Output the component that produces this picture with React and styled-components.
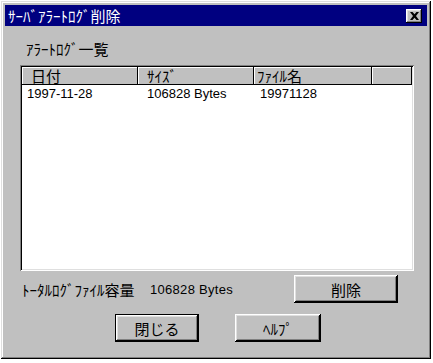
import React from 'react'
import styled, { createGlobalStyle } from 'styled-components'

const GlobalStyle = createGlobalStyle`
  html, body {
    margin: 0;
    padding: 0;
    background: #ffffff;
  }
  body {
    font-family: "Liberation Sans", "Noto Sans CJK JP", sans-serif;
  }
`

const Page = styled.div`
  padding: 1px;
`

const Window = styled.div`
  box-sizing: border-box;
  width: 430px;
  height: 358px;
  padding: 4px;
  background: #c0c0c0;
  box-shadow: inset -1px -1px #000000, inset 1px 1px #dfdfdf,
    inset -2px -2px #808080, inset 2px 2px #ffffff;
  display: flex;
  flex-direction: column;
`

const TitleBar = styled.div`
  height: 21px;
  background: #000080;
  display: flex;
  align-items: center;
  justify-content: space-between;
  padding: 0 5px 0 3px;
`

const TitleText = styled.span`
  color: #ffffff;
  font-size: 15px;
  font-family: "Noto Sans CJK JP", sans-serif;
  line-height: 17px;
`

const CloseBox = styled.div`
  width: 16px;
  height: 14px;
  box-sizing: border-box;
  background: #c0c0c0;
  box-shadow: inset -1px -1px #000000, inset 1px 1px #ffffff,
    inset -2px -2px #808080, inset 2px 2px #dfdfdf;
  display: flex;
  align-items: center;
  justify-content: center;
`

const Body = styled.div`
  flex: 1;
  display: flex;
  flex-direction: column;
  padding: 14px 13px 0 15px;
`

const Label = styled.div`
  font-size: 15px;
  font-family: "Noto Sans CJK JP", sans-serif;
  line-height: 18px;
  height: 18px;
  padding-left: 6px;
  margin-bottom: 7px;
`

const ListBox = styled.div`
  box-sizing: border-box;
  height: 206px;
  background: #ffffff;
  padding: 2px;
  box-shadow: inset 1px 1px #808080, inset -1px -1px #ffffff,
    inset 2px 2px #000000, inset -2px -2px #dfdfdf;
  display: flex;
  flex-direction: column;
`

const Columns = styled.div`
  display: grid;
  grid-template-columns: 116px 116px 118px 1fr;
`

const HeadCell = styled.div`
  box-sizing: border-box;
  height: 18px;
  background: #c0c0c0;
  box-shadow: inset -1px -1px #000000, inset 1px 1px #ffffff;
  font-size: 15px;
  font-family: "Noto Sans CJK JP", sans-serif;
  line-height: 17px;
  padding-left: ${p => p.$pad}px;
  white-space: nowrap;
`

const Cell = styled.div`
  height: 17px;
  font-size: 13px;
  line-height: 17px;
  padding-left: ${p => p.$pad}px;
  white-space: nowrap;
  color: #000000;
`

const TotalRow = styled.div`
  display: flex;
  align-items: center;
  margin-top: 4px;
  height: 28px;
  padding-left: 2px;
`

const TotalLabel = styled.span`
  font-size: 15px;
  font-family: "Noto Sans CJK JP", sans-serif;
  width: 128px;
`

const TotalValue = styled.span`
  font-size: 13px;
  letter-spacing: 0.3px;
  flex: 1;
`

const Button = styled.button`
  box-sizing: border-box;
  width: ${p => p.$w}px;
  height: 28px;
  margin: 0;
  padding: 0;
  border: none;
  background: #c0c0c0;
  font-size: 15px;
  font-family: "Noto Sans CJK JP", sans-serif;
  color: #000000;
  box-shadow: ${p =>
    p.$default
      ? 'inset 0 0 0 1px #000000, inset -2px -2px #000000, inset 2px 2px #ffffff, inset -3px -3px #808080, inset 3px 3px #dfdfdf'
      : 'inset -1px -1px #000000, inset 1px 1px #ffffff, inset -2px -2px #000000, inset 2px 2px #dfdfdf, inset -3px -3px #808080'};
`

const DeleteButton = styled(Button)`
  margin-right: 16px;
`

const ButtonRow = styled.div`
  display: flex;
  justify-content: center;
  gap: 36px;
  margin-top: 11px;
  padding-left: 2px;
`

const columns = [
  { title: '日付', pad: 9 },
  { title: 'ｻｲｽﾞ', pad: 9 },
  { title: 'ﾌｧｲﾙ名', pad: 3 },
  { title: '', pad: 0 },
]

const rows = [['1997-11-28', '106828 Bytes', '19971128', '']]
const cellPads = [5, 9, 6, 0]

export default function App() {
  return (
    <Page>
      <GlobalStyle />
      <Window>
        <TitleBar>
          <TitleText>ｻｰﾊﾞｱﾗｰﾄﾛｸﾞ削除</TitleText>
          <CloseBox>
            <svg width="9" height="8" viewBox="0 0 9 8">
              <path d="M0 0h2.5l2 2.3 2-2.3H9L6 4l3 4H6.5l-2-2.3-2 2.3H0l3-4z" fill="#000" />
            </svg>
          </CloseBox>
        </TitleBar>
        <Body>
          <Label>ｱﾗｰﾄﾛｸﾞ一覧</Label>
          <ListBox>
            <Columns>
              {columns.map((c, i) => (
                <HeadCell key={i} $pad={c.pad}>{c.title}</HeadCell>
              ))}
            </Columns>
            {rows.map((r, ri) => (
              <Columns key={ri}>
                {r.map((v, i) => (
                  <Cell key={i} $pad={cellPads[i]}>{v}</Cell>
                ))}
              </Columns>
            ))}
          </ListBox>
          <TotalRow>
            <TotalLabel>ﾄｰﾀﾙﾛｸﾞﾌｧｲﾙ容量</TotalLabel>
            <TotalValue>106828 Bytes</TotalValue>
            <DeleteButton $w={104}>削除</DeleteButton>
          </TotalRow>
          <ButtonRow>
            <Button $w={84} $default>閉じる</Button>
            <Button $w={86}>ﾍﾙﾌﾟ</Button>
          </ButtonRow>
        </Body>
      </Window>
    </Page>
  )
}
